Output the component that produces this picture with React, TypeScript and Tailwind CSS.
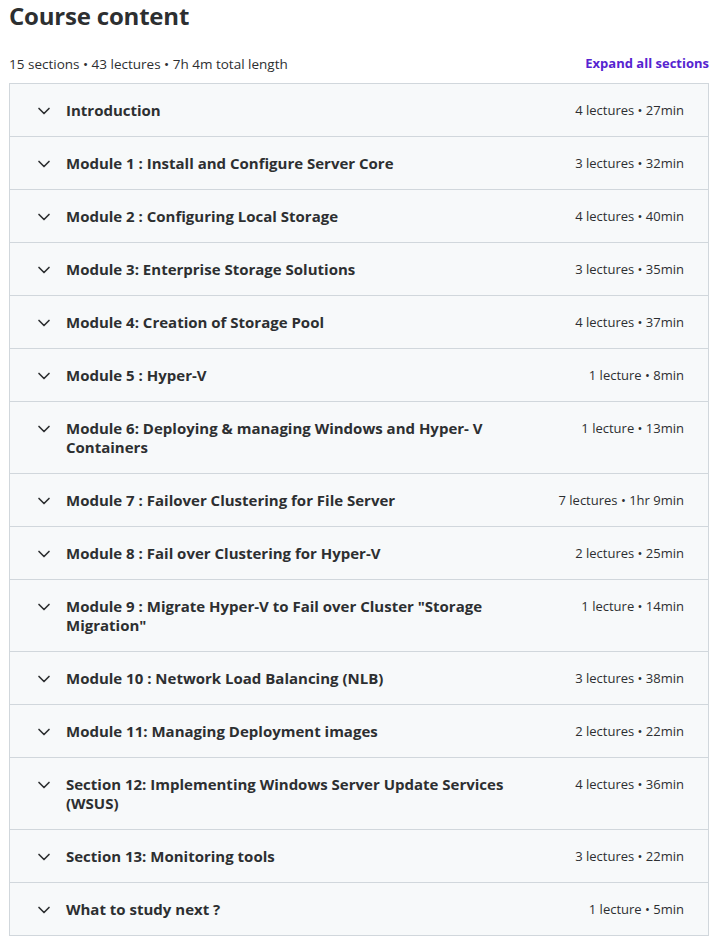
import React from 'react';
import { ChevronDown } from 'lucide-react';

const sections = [
  { title: 'Introduction', meta: '4 lectures • 27min' },
  { title: 'Module 1 : Install and Configure Server Core', meta: '3 lectures • 32min' },
  { title: 'Module 2 : Configuring Local Storage', meta: '4 lectures • 40min' },
  { title: 'Module 3: Enterprise Storage Solutions', meta: '3 lectures • 35min' },
  { title: 'Module 4: Creation of Storage Pool', meta: '4 lectures • 37min' },
  { title: 'Module 5 : Hyper-V', meta: '1 lecture • 8min' },
  { title: 'Module 6: Deploying & managing Windows and Hyper- V Containers', meta: '1 lecture • 13min' },
  { title: 'Module 7 : Failover Clustering for File Server', meta: '7 lectures • 1hr 9min' },
  { title: 'Module 8 : Fail over Clustering for Hyper-V', meta: '2 lectures • 25min' },
  { title: 'Module 9 : Migrate Hyper-V to Fail over Cluster "Storage Migration"', meta: '1 lecture • 14min' },
  { title: 'Module 10 : Network Load Balancing (NLB)', meta: '3 lectures • 38min' },
  { title: 'Module 11: Managing Deployment images', meta: '2 lectures • 22min' },
  { title: 'Section 12: Implementing Windows Server Update Services (WSUS)', meta: '4 lectures • 36min' },
  { title: 'Section 13: Monitoring tools', meta: '3 lectures • 22min' },
  { title: 'What to study next ?', meta: '1 lecture • 5min' },
];

export default function App() {
  return (
    <div className="pl-[9px] w-[709px] text-[#2d2f31] bg-white" style={{ fontFamily: '"Open Sans", sans-serif' }}>
      <h2 className="pt-[1px] text-[24px] font-bold leading-[30px] tracking-[-0.2px]">Course content</h2>

      <div className="mt-[22px] mb-[8px] flex items-center justify-between h-[22px]">
        <span className="text-[13.5px]">15 sections • 43 lectures • 7h 4m total length</span>
        <button className="text-[13px] font-bold text-[#5624d0]">Expand all sections</button>
      </div>

      <div className="border border-[#d1d7dc]">
        {sections.map((s, i) => (
          <div
            key={i}
            className={
              'flex items-start bg-[#f7f9fa] pl-6 pr-6 pt-[17px] pb-4 ' +
              (i > 0 ? 'border-t border-[#d1d7dc]' : '')
            }
          >
            <span className="flex h-[19px] w-5 shrink-0 items-center justify-center">
              <ChevronDown className="w-5 h-5" strokeWidth={2} />
            </span>
            <span className="ml-3 flex-1 text-[15px] font-bold leading-[19px]">{s.title}</span>
            <span className="ml-8 whitespace-nowrap text-[13px] leading-[19px]">{s.meta}</span>
          </div>
        ))}
      </div>
    </div>
  );
}
